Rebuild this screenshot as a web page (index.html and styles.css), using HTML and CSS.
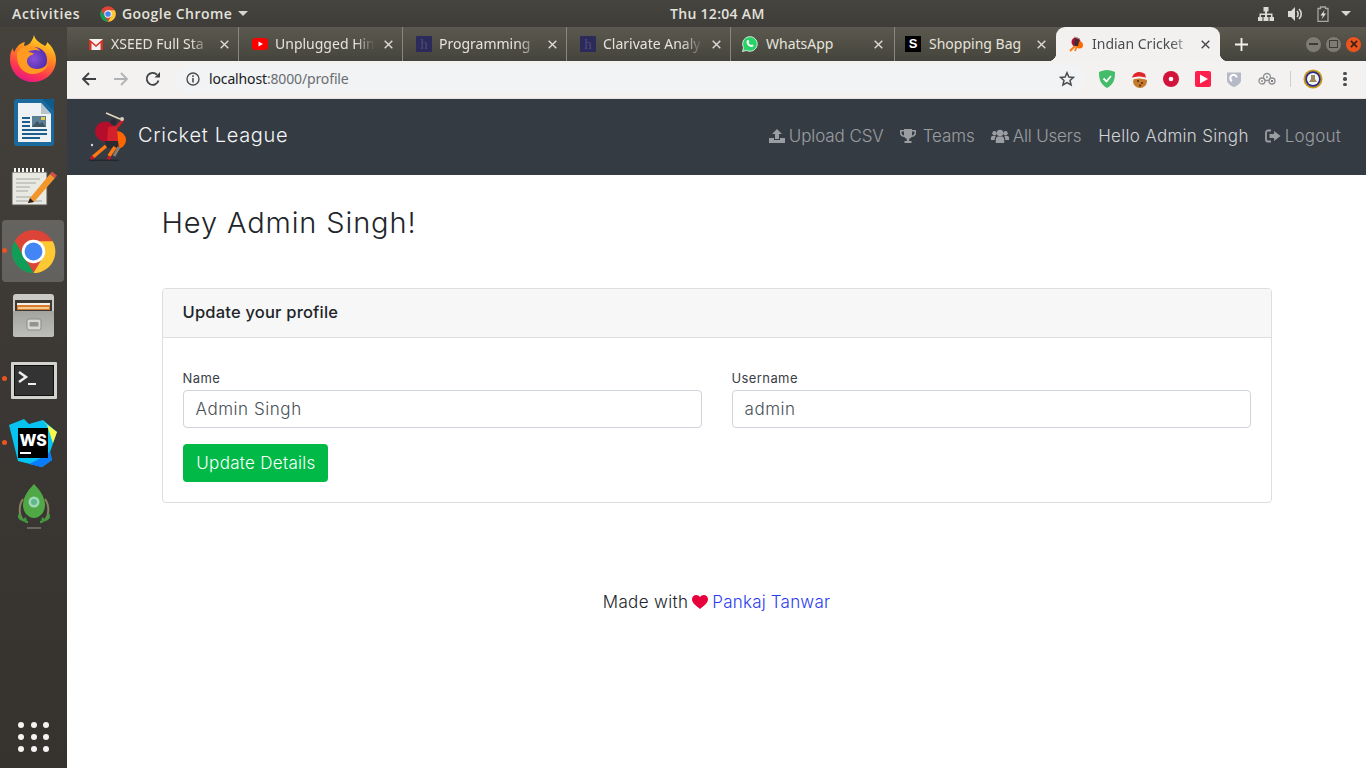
FILE: index.html
```html
<!DOCTYPE html>
<html lang="en">
<head>
<meta charset="utf-8">
<title>Indian Cricket League</title>
<link rel="stylesheet" href="styles.css">
</head>
<body>
<header class="topbar">
  <div class="top-left">
    <span class="activities">Activities</span>
    <span class="app-menu">
      <svg class="top-chrome" viewBox="0 0 48 48"><circle cx="24" cy="24" r="23" fill="#db4437"/><path d="M4 12.500 14 30 24.500 47A23 23 0 0 1 4 12.500z" fill="#0f9d58"/><path d="M24 13H44.500A23 23 0 0 1 24 47L34 30z" fill="#fcc934"/><circle cx="24" cy="24" r="11" fill="#fff"/><circle cx="24" cy="24" r="8.500" fill="#4285f4"/></svg>
      Google Chrome
      <i class="caret"></i>
    </span>
  </div>
  <time class="clock">Thu 12:04 AM</time>
  <div class="tray">
    <svg class="tray-icon" viewBox="0 0 16 16"><path d="M5.500 1h5v4.500H9v2h5.500V11H16v4h-4.500v-4H13V9H9v2h1.500v4h-5v-4H7V9H3v2h1.500v4H0v-4h1.500V7.500H7v-2H5.500z" fill="#dcdad5"/></svg>
    <svg class="tray-icon" viewBox="0 0 16 16"><path d="M1 5h3l4-4v14l-4-4H1z" fill="#dcdad5"/><path d="M10 5c1.500 1.500 1.500 4.500 0 6M12 3c3 2.500 3 7.500 0 10" fill="none" stroke="#dcdad5" stroke-width="1.600"/></svg>
    <svg class="tray-icon" viewBox="0 0 16 16"><path d="M3 2.500h2.500V1h5v1.500H13V15.500H3z" fill="none" stroke="#a9a7a1" stroke-width="1.300"/><path d="M9.500 4 5.500 9.500H8L6.500 13.500 11 7.500H8.500z" fill="#e6e4df"/></svg>
    <i class="caret"></i>
  </div>
</header>

<div class="desktop">
  <nav class="dock">
    <div class="dock-cell dock-first">
      <svg class="dock-firefox" viewBox="0 0 48 48">
        <defs>
          <linearGradient id="fx1" x1="0.700" y1="0" x2="0.300" y2="1"><stop offset="0" stop-color="#ffe226"/><stop offset=".4" stop-color="#ff8a1f"/><stop offset=".75" stop-color="#ff3750"/><stop offset="1" stop-color="#e31587"/></linearGradient>
          <radialGradient id="fx2" cx=".5" cy=".45" r=".55"><stop offset="0" stop-color="#8a4fd8"/><stop offset="1" stop-color="#4a2ba8"/></radialGradient>
        </defs>
        <path d="M25 1c1 5 6 8 11 11 2-2 2-3 2-4 6 5 9 12 9 18 0 12-10 22-23 22S1 38 1 25c0-5 1-8 3-11 0 2 .5 3 1.500 4C7 13 11 9 16 8c-1 2-1 3-.5 4 5-1 8-5 9.500-11z" fill="url(#fx1)"/>
        <circle cx="25" cy="26" r="13" fill="url(#fx2)"/>
        <path d="M8 19c2-4 7-7 12-7 5 0 9 2 11 5-4-2-9-1-12 1 3 0 5 1 6 2-3 1-7 3-7 7 0 5 5 8 10 8 5 0 9-3 11-6-1 7-8 11-15 11C14 40 7 32 8 19z" fill="#ff9b20"/>
      </svg>
    </div>
    <div class="dock-cell">
      <svg class="dock-writer" viewBox="0 0 40 48">
        <path d="M3 0H40V44a3 3 0 0 1-3 3H3a3 3 0 0 1-3-3V3a3 3 0 0 1 3-3z" fill="#1a6a9e"/>
        <path d="M28 0H37a3 3 0 0 1 3 3V12z" fill="#0e5b8e"/>
        <path d="M4 4H27L37 15V43H4z" fill="#eef2f4"/>
        <path d="M27 4V15H37z" fill="#b8c4cc"/>
        <path d="M8 18h8v2H8zM8 22h8v2H8zM8 26h8v2H8zM8 30h25v2H8zM8 34h25v2H8zM8 38h18v2H8z" fill="#1c5f8c"/>
        <rect x="18" y="17" width="14" height="11" fill="#5d7f95"/>
        <path d="M18 28l5-6 3 3 2-2 4 5z" fill="#3d5664"/><rect x="27" y="18" width="4" height="3" fill="#e9c948"/>
      </svg>
    </div>
    <div class="dock-cell">
      <svg class="dock-notes" viewBox="0 0 46 40">
        <path d="M1 5H36V38H1z" fill="#e9e9e4" stroke="#55524d"/>
        <path d="M4 5V1M8 5V1M12 5V1M16 5V1M20 5V1M24 5V1M28 5V1M32 5V1" stroke="#f4f4f2" stroke-width="2"/>
        <path d="M5 12h24M5 16h20M5 20h14M5 24h12M5 30h18M5 34h26" stroke="#a8a8a2" stroke-width="1.200"/>
        <path d="M19 31 39 7l5 4-21 24-6 1z" fill="#f2952b"/>
        <path d="M39 7l2-2.500 5 4-2 2.500z" fill="#d4504f"/>
        <path d="M17 36l2-5 4 4z" fill="#222"/>
      </svg>
    </div>
    <div class="dock-cell">
      <span class="dock-running"></span>
      <span class="dock-active">
        <svg class="dock-chrome" viewBox="0 0 48 48"><circle cx="24" cy="24" r="23" fill="#db4437"/><path d="M4 12.500 14 30 24.500 47A23 23 0 0 1 4 12.500z" fill="#0f9d58"/><path d="M24 13H44.500A23 23 0 0 1 24 47L34 30z" fill="#fcc934"/><circle cx="24" cy="24" r="12.500" fill="#fff"/><circle cx="24" cy="24" r="9.500" fill="#4285f4"/></svg>
      </span>
    </div>
    <div class="dock-cell">
      <svg class="dock-files" viewBox="0 0 41 43">
        <defs>
          <linearGradient id="fl1" x1="0" y1="0" x2="0" y2="1"><stop offset="0" stop-color="#a3a3a0"/><stop offset="1" stop-color="#bdbdba"/></linearGradient>
        </defs>
        <path d="M3 0H38a3 3 0 0 1 3 3V42H0V3a3 3 0 0 1 3-3z" fill="#c9c9c6"/>
        <rect x="2" y="6" width="37" height="14" fill="#3b3835"/>
        <rect x="4" y="9" width="33" height="2" fill="#f5f1e8"/>
        <rect x="4" y="11" width="33" height="5" fill="#d77a32"/>
        <rect x="5" y="13" width="31" height="2" fill="#f5c98a"/>
        <path d="M0 17H41V41a2 2 0 0 1-2 2H2a2 2 0 0 1-2-2z" fill="url(#fl1)"/>
        <rect x="14" y="25" width="14" height="11" rx="2" fill="#d6d6d3" stroke="#8b8b88"/>
        <rect x="16.500" y="28" width="9" height="4.500" rx="1" fill="#92928f"/>
      </svg>
    </div>
    <div class="dock-cell dock-low">
      <span class="dock-running"></span>
      <svg class="dock-term" viewBox="0 0 46 37">
        <rect width="46" height="37" rx="1" fill="#d2d2cf"/>
        <rect x="3" y="3" width="40" height="31" fill="#111"/>
        <rect x="4" y="4" width="38" height="29" fill="#333"/>
        <path d="M8 10l7 5-7 5" fill="none" stroke="#eee" stroke-width="2.500"/>
        <rect x="17" y="21" width="8" height="2" fill="#eee"/>
      </svg>
    </div>
    <div class="dock-cell">
      <span class="dock-running"></span>
      <svg class="dock-ws" viewBox="0 0 48 48">
        <path d="M0 6 15 0l5 5 14-4 14 12-7 20 2 8-10 7-24-6-3-12z" fill="#07c3f2"/>
        <path d="M32 1 48 13 44 24 38 6z" fill="#fcf84a"/>
        <path d="M30 40l11-7 2 8-10 7-13-3z" fill="#087cfa"/>
        <rect x="9" y="9" width="30" height="30" fill="#000"/>
        <text class="ws-text" x="10.500" y="27">WS</text>
        <rect x="11" y="33" width="11" height="2" fill="#fff"/>
      </svg>
    </div>
    <div class="dock-cell">
      <svg class="dock-rocket" viewBox="0 0 36 46">
        <path d="M7 15C2 22 3 33 8 37M29 15c5 7 4 18-1 22" fill="none" stroke="#8a8260" stroke-width="2"/>
        <path d="M18 0C25 7 29 14 29 21c0 7-5 13-11 13S7 28 7 21C7 14 11 7 18 0z" fill="#4fa845"/>
        <circle cx="18" cy="18" r="5.500" fill="#9fd8b8"/><circle cx="18" cy="18" r="3" fill="#5fb78a"/>
        <path d="M4 30c-2 3 0 6 4 6M32 30c2 3 0 6-4 6M10 34c-2 2-1 4 2 4M26 34c2 2 1 4-2 4" fill="none" stroke="#3e9c3e" stroke-width="2.500"/>
        <path d="M11 44h14" stroke="#7a7770" stroke-width="1.500"/>
      </svg>
    </div>
    <div class="dock-grid">
      <i></i><i></i><i></i><i></i><i></i><i></i><i></i><i></i><i></i>
    </div>
  </nav>

  <div class="window">
    <div class="tabstrip">
      <div class="tab">
        <svg class="fav" viewBox="0 0 16 16"><path d="M1 3H15V14H1z" fill="#f4f4f4"/><path d="M1 3 8 9 15 3V14H12.500V7L8 11 3.500 7V14H1z" fill="#d93025"/></svg>
        <span class="tab-title tab-fade">XSEED Full Sta</span>
        <svg class="tab-x" viewBox="0 0 9 9"><path d="M.7.7 8.300 8.300M8.300.7.7 8.300" stroke="currentColor" stroke-width="1.400"/></svg>
      </div>
      <div class="tab">
        <svg class="fav" viewBox="0 0 16 16"><rect y="2" width="16" height="12" rx="3.500" fill="#f00"/><path d="M6.500 5.500 11 8 6.500 10.500z" fill="#fff"/></svg>
        <span class="tab-title tab-fade">Unplugged Hin</span>
        <svg class="tab-x" viewBox="0 0 9 9"><path d="M.7.7 8.300 8.300M8.300.7.7 8.300" stroke="currentColor" stroke-width="1.400"/></svg>
      </div>
      <div class="tab">
        <span class="fav fav-h">h</span>
        <span class="tab-title tab-fade">Programming</span>
        <svg class="tab-x" viewBox="0 0 9 9"><path d="M.7.7 8.300 8.300M8.300.7.7 8.300" stroke="currentColor" stroke-width="1.400"/></svg>
      </div>
      <div class="tab">
        <span class="fav fav-h">h</span>
        <span class="tab-title tab-fade">Clarivate Analy</span>
        <svg class="tab-x" viewBox="0 0 9 9"><path d="M.7.7 8.300 8.300M8.300.7.7 8.300" stroke="currentColor" stroke-width="1.400"/></svg>
      </div>
      <div class="tab tab-whatsapp">
        <svg class="fav" viewBox="0 0 16 16"><path d="M.5 15.500 1.600 11.600A7.300 7.300 0 1 1 4.500 14.400z" fill="#25d366" stroke="#fff" stroke-width=".8"/><path d="M5.300 4.300c.9-.7 1.300-.4 1.600.4l.3.900c.1.300-.4.800-.6 1.100.5 1 1.400 1.900 2.500 2.400.3-.2.700-.8 1-.7l1.200.6c.4.200.3.800 0 1.300-.9 1.200-2.700.9-4.500-.3C5 8.700 3.700 5.800 5.300 4.300z" fill="#fff"/></svg>
        <span class="tab-title">WhatsApp</span>
        <svg class="tab-x" viewBox="0 0 9 9"><path d="M.7.7 8.300 8.300M8.300.7.7 8.300" stroke="currentColor" stroke-width="1.400"/></svg>
      </div>
      <div class="tab tab-shop">
        <span class="fav fav-s">S</span>
        <span class="tab-title">Shopping Bag</span>
        <svg class="tab-x" viewBox="0 0 9 9"><path d="M.7.7 8.300 8.300M8.300.7.7 8.300" stroke="currentColor" stroke-width="1.400"/></svg>
      </div>
      <div class="tab tab-active">
        <svg class="fav" viewBox="0 0 16 16"><circle cx="7" cy="6" r="4.500" fill="#b01030"/><circle cx="10.500" cy="9" r="3.500" fill="#ff6a00"/><path d="M5 1 11 3" stroke="#9a8f86"/><path d="M6 3h3l1 3-1 4H5z" fill="#3a2f33"/><path d="M6 10 1 15M8 10 6 15" stroke="#ff7a10" stroke-width="1.800"/></svg>
        <span class="tab-title tab-fade">Indian Cricket</span>
        <svg class="tab-x" viewBox="0 0 9 9"><path d="M.7.7 8.300 8.300M8.300.7.7 8.300" stroke="currentColor" stroke-width="1.400"/></svg>
      </div>
      <svg class="tab-new" viewBox="0 0 14 14"><path d="M7 0V14M0 7H14" stroke="#f2f1ee" stroke-width="2"/></svg>
      <div class="wm">
        <span class="wm-btn"><i class="wm-min"></i></span>
        <span class="wm-btn"><i class="wm-max"></i></span>
        <span class="wm-btn wm-close"><svg class="wm-x" viewBox="0 0 9 9"><path d="M1 1 8 8M8 1 1 8" stroke="#3a2014" stroke-width="1.800"/></svg></span>
      </div>
    </div>

    <div class="toolbar">
      <svg class="tb-btn" viewBox="0 0 16 16"><path d="M15 8H2M8 2 2 8l6 6" fill="none" stroke="#3c4043" stroke-width="1.800"/></svg>
      <svg class="tb-btn tb-gap" viewBox="0 0 16 16"><path d="M1 8H14M8 2l6 6-6 6" fill="none" stroke="#b0b2b4" stroke-width="1.800"/></svg>
      <svg class="tb-btn tb-gap" viewBox="0 0 16 16"><path d="M13.500 9.500A6 6 0 1 1 12 3.600" fill="none" stroke="#3c4043" stroke-width="1.800"/><path d="M9.500 6.500H15V1z" fill="#3c4043"/></svg>
      <div class="omnibox">
        <svg class="omni-info" viewBox="0 0 14 14"><circle cx="7" cy="7" r="6" fill="none" stroke="#4a4d50" stroke-width="1.400"/><path d="M6.200 6h1.600v4.500H6.200zM6.200 3.300h1.600v1.600H6.200z" fill="#4a4d50"/></svg>
        <span class="url"><span class="url-host">localhost</span>:8000/profile</span>
        <svg class="omni-star" viewBox="0 0 16 16"><path d="M8 1.700 9.900 6l4.600.4-3.500 3 1.100 4.500L8 11.500 3.900 13.900 5 9.400l-3.500-3L6.100 6z" fill="none" stroke="#4a4d50" stroke-width="1.500"/></svg>
      </div>
      <div class="exts">
        <svg class="ext ext-tall" viewBox="0 0 16 18"><path d="M8 0C5 0 2.500 1 0 2c0 7 1 12 8 16 7-4 8-9 8-16C13.500 1 11 0 8 0z" fill="#44bd6a"/><path d="M4.500 8.500 7.500 11.500 12 6" fill="none" stroke="#fff" stroke-width="1.800"/></svg>
        <svg class="ext ext-big" viewBox="0 0 18 18"><circle cx="10" cy="11" r="7" fill="#c47a2a"/><circle cx="8" cy="11" r="1" fill="#4a2b10"/><circle cx="12" cy="13" r="1" fill="#4a2b10"/><circle cx="10" cy="15.500" r="1" fill="#4a2b10"/><path d="M2 8C3 2 10 0 15 4l1 4z" fill="#e0262b"/><path d="M1 8c5-2 10-2 16 0v2c-6-2-11-2-16 0z" fill="#f5f5f5"/><circle cx="1.800" cy="10" r="1.600" fill="#eee"/></svg>
        <svg class="ext" viewBox="0 0 16 16"><circle cx="8" cy="8" r="8" fill="#d2143a"/><circle cx="8" cy="8" r="2.300" fill="#fff"/></svg>
        <svg class="ext" viewBox="0 0 16 16"><rect width="16" height="16" rx="2" fill="#ff1f4b"/><path d="M5 3.500 13 8 5 12.500z" fill="#fff"/></svg>
        <svg class="ext ext-shield" viewBox="0 0 14 16"><path d="M0 1.500h14V9c0 3-3 5.500-7 7-4-1.500-7-4-7-7z" fill="#b6b9c6"/><path d="M9.800 6.500A3.300 3.300 0 1 0 5 10" fill="none" stroke="#fff" stroke-width="2"/></svg>
        <svg class="ext ext-big" viewBox="0 0 18 14"><g fill="none" stroke="#8e9093" stroke-width="1.300"><circle cx="4" cy="9" r="3"/><circle cx="9" cy="5" r="3.500"/><circle cx="14" cy="9" r="3"/></g><circle cx="9" cy="5" r="1" fill="#8e9093"/><circle cx="4" cy="9" r="1" fill="#8e9093"/><circle cx="14" cy="9" r="1" fill="#555"/></svg>
      </div>
      <span class="tb-sep"></span>
      <svg class="avatar" viewBox="0 0 20 20"><circle cx="10" cy="10" r="9.500" fill="#c59a1b"/><circle cx="10" cy="10" r="7.700" fill="#2a2a8c"/><circle cx="10" cy="10" r="6" fill="#f4f4f4"/><path d="M8 6h4v4l2 3H6l2-3z" fill="#9a8a5a"/></svg>
      <span class="kebab"><i></i><i></i><i></i></span>
    </div>

    <div class="page">
      <div class="navbar">
        <div class="brand">
          <svg class="logo" viewBox="0 0 40 50">
            <circle cx="16" cy="20.500" r="10" fill="#b50d2c"/>
            <circle cx="28" cy="29" r="9" fill="#ff6600"/>
            <path d="M17 2 31 8" stroke="#e8d8c0" stroke-width="1.500"/>
            <path d="M27 17 34 9" stroke="#c4202a" stroke-width="3"/>
            <circle cx="33" cy="8" r="2" fill="#d9d0c4"/>
            <path d="M19 16 28 15 29 31 18 31z" fill="#d4202a"/>
            <circle cx="24.500" cy="11" r="3" fill="#2e2a35"/>
            <path d="M16 30H29L30 37H17z" fill="#2a2a30"/>
            <path d="M17 35 4 46" stroke="#ff7a10" stroke-width="3.500"/>
            <path d="M26 36 20 45" stroke="#ff7a10" stroke-width="3.500"/>
            <path d="M30 36 25 45" stroke="#8a7a70" stroke-width="3"/>
            <circle cx="3" cy="47" r="2" fill="#c8142c"/>
            <circle cx="20" cy="47" r="2" fill="#c8142c"/>
            <path d="M0 49.300h30" stroke="#23272c" stroke-width="1.300"/>
            <circle cx="3" cy="34" r="1.200" fill="#d8d8d8"/>
          </svg>
          <span class="brand-text">Cricket League</span>
        </div>
        <ul class="nav">
          <li class="nav-item nav-upload">
            <svg class="nav-icon" viewBox="0 0 16 16"><path d="M8 1 13 6H10V11H6V6H3zM0 10H5V12H11V10H16V15H0z" fill="currentColor"/></svg>
            <span>Upload CSV</span>
          </li>
          <li class="nav-item nav-teams">
            <svg class="nav-icon" viewBox="0 0 16 16"><path d="M4 1H12V2H16V5C16 8 13 9 11.500 9C11 10 10 10.500 9.200 10.700V13H11.500V15H4.500V13H6.800V10.700C6 10.500 5 10 4.500 9 3 9 0 8 0 5V2H4zM1.500 3.500V5C1.500 6.300 2.800 7.200 4 7.500V3.500zM14.500 3.500H12V7.500C13.200 7.200 14.500 6.300 14.500 5z" fill="currentColor"/></svg>
            <span>Teams</span>
          </li>
          <li class="nav-item nav-users">
            <svg class="nav-icon nav-icon-wide" viewBox="0 0 18 15"><g fill="currentColor"><circle cx="3.500" cy="4.200" r="2.200"/><circle cx="14.500" cy="4.200" r="2.200"/><circle cx="9" cy="4" r="3.200"/><path d="M0 11V8.500C0 7.500 1 7 2 7h2.800C4 8 3.700 9 3.700 11zM18 11V8.500C18 7.500 17 7 16 7h-2.800c.8 1 1.100 2 1.100 4z"/><path d="M4.800 14V10.500C4.800 8.500 6 7.500 7 7.500h4c1 0 2.200 1 2.200 3V14z"/></g></svg>
            <span>All Users</span>
          </li>
          <li class="nav-item nav-active"><span>Hello Admin Singh</span></li>
          <li class="nav-item nav-logout">
            <svg class="nav-icon" viewBox="0 0 16 16"><path d="M6 2.500H3A2 2 0 0 0 1 4.500V11.500A2 2 0 0 0 3 13.500H6" fill="none" stroke="currentColor" stroke-width="1.800"/><path d="M9 3 15.500 8 9 13V10H4.500V6H9z" fill="currentColor"/></svg>
            <span>Logout</span>
          </li>
        </ul>
      </div>

      <main class="container">
        <h1 class="greeting">Hey Admin Singh!</h1>
        <section class="card">
          <h2 class="card-header">Update your profile</h2>
          <form class="card-body">
            <div class="form-row">
              <label class="field">
                <span class="field-label">Name</span>
                <input class="field-input" type="text" value="Admin Singh">
              </label>
              <label class="field">
                <span class="field-label">Username</span>
                <input class="field-input" type="text" value="admin">
              </label>
            </div>
            <button class="btn" type="button">Update Details</button>
          </form>
        </section>
        <footer class="credit">
          Made with
          <svg class="heart" viewBox="0 0 16 14"><path d="M8 14C3 10 0 7.500 0 4.200 0 1.800 1.900 0 4.200 0 5.800 0 7.200.8 8 2.200 8.800.8 10.200 0 11.800 0 14.100 0 16 1.800 16 4.200 16 7.500 13 10 8 14z" fill="#e6003c"/></svg>
          <a class="credit-link">Pankaj Tanwar</a>
        </footer>
      </main>
    </div>
  </div>
</div>
</body>
</html>
```
FILE: styles.css
```css
* { box-sizing: border-box; }
html, body { margin: 0; padding: 0; height: 100%; overflow: hidden; }
body {
  width: 1366px;
  height: 768px;
  display: flex;
  flex-direction: column;
  font-family: Inter, "Liberation Sans", sans-serif;
  background: #fff;
}

/* GNOME top bar */
.topbar {
  height: 27px;
  flex: none;
  display: flex;
  align-items: center;
  padding-left: 12px;
  background: linear-gradient(#45443f, #3e3d39);
  color: #e4e2dc;
  font: 600 14px "Open Sans", sans-serif;
}
.top-left { width: 658px; display: flex; align-items: center; }
.activities { width: 88px; letter-spacing: .7px; }
.app-menu { display: flex; align-items: center; letter-spacing: .45px; }
.top-chrome { width: 16px; height: 16px; margin-right: 6px; }
.caret {
  display: inline-block;
  width: 0; height: 0;
  border-left: 5px solid transparent;
  border-right: 5px solid transparent;
  border-top: 5px solid #d8d6d0;
}
.app-menu .caret { margin-left: 6px; }
.clock { letter-spacing: .3px; }
.tray { margin-left: auto; display: flex; align-items: center; padding-right: 15px; }
.tray-icon { width: 16px; height: 16px; margin-right: 12.500px; }
.tray .caret { margin-left: -2.500px; }

.desktop { flex: 1; display: flex; min-height: 0; }

/* Launcher */
.dock {
  width: 67px;
  flex: none;
  display: flex;
  flex-direction: column;
  background: linear-gradient(#45423c, #3a3734 50%, #36332f);
}
.dock-cell {
  position: relative;
  height: 64px;
  flex: none;
  display: flex;
  align-items: center;
  justify-content: center;
}
.dock-first { padding-bottom: 3px; }
.dock-low { padding-top: 3px; }
.dock-running {
  position: absolute;
  left: 2px; top: 29px;
  width: 5px; height: 5px;
  border-radius: 50%;
  background: #e95420;
}
.dock-active {
  width: 62px; height: 62px;
  margin-left: -1px;
  border-radius: 4px;
  background: rgba(255,255,255,.2);
  display: flex;
  align-items: center;
  justify-content: center;
}
.dock-firefox { width: 48px; height: 48px; margin-left: -1px; }
.dock-writer { width: 40px; height: 48px; }
.dock-notes { width: 46px; height: 40px; }
.dock-chrome { width: 45px; height: 45px; }
.dock-files { width: 41px; height: 43px; margin-left: -1px; }
.dock-term { width: 46px; height: 37px; }
.dock-ws { width: 48px; height: 48px; margin-left: -1px; }
.ws-text { font: 800 16px Inter, sans-serif; fill: #fff; }
.dock-rocket { width: 36px; height: 46px; }
.dock-grid {
  margin: auto 18px 16px;
  display: grid;
  grid-template-columns: repeat(3, 6px);
  gap: 6px;
  justify-content: space-between;
}
.dock-grid i { width: 6px; height: 6px; border-radius: 50%; background: #f4f3f1; }

/* Browser */
.window { flex: 1; min-width: 0; display: flex; flex-direction: column; }
.tabstrip {
  height: 34px;
  flex: none;
  display: flex;
  align-items: stretch;
  padding-left: 8px;
  background: linear-gradient(#5b594f, #45443c);
  font: 400 14px "Noto Sans", sans-serif;
}
.tab {
  width: 164px;
  flex: none;
  position: relative;
  display: flex;
  align-items: center;
  padding-left: 13px;
  color: #e6e3dc;
  border-right: 1px solid #8a887e;
}
.tab-whatsapp { padding-left: 11px; }
.tab-shop { border-right: 0; width: 161px; padding-left: 10px; }
.tab-whatsapp .fav, .tab-shop .fav { margin-right: 8px; }
.tab-whatsapp .tab-title, .tab-shop .tab-title { width: 101px; }
.fav { width: 16px; height: 16px; flex: none; margin-right: 7px; }
.fav-h {
  background: #2b2a5a;
  color: #4d4c75;
  font: 400 15px/16px "Liberation Serif", serif;
  text-align: center;
  border-radius: 1px;
}
.fav-s {
  background: #000;
  color: #fff;
  font: 700 13px/16px "Liberation Sans", sans-serif;
  text-align: center;
}
.tab-title {
  width: 102px;
  flex: none;
  margin-top: -2px;
  white-space: nowrap;
  overflow: hidden;
}
.tab-fade {
  -webkit-mask-image: linear-gradient(90deg, #000 78%, transparent 98%);
  mask-image: linear-gradient(90deg, #000 78%, transparent 98%);
}
.tab-x {
  margin-left: 7px;
  width: 9px;
  height: 9px;
  flex: none;
  color: #dcdad4;
}
.tab-active {
  border-right: 0;
  background: #f2f1f0;
  color: #4a4d50;
  border-radius: 9px 9px 0 0;
}
.tab-active .tab-x { color: #45474a; }
.tab-active::before, .tab-active::after {
  content: "";
  position: absolute;
  bottom: 0;
  width: 8px; height: 8px;
}
.tab-active::before { left: -8px; background: radial-gradient(circle at 0 0, transparent 8px, #f2f1f0 8.500px); }
.tab-active::after { right: -8px; background: radial-gradient(circle at 100% 0, transparent 8px, #f2f1f0 8.500px); }
.tab-new { width: 13px; height: 13px; margin: auto 0 auto 15px; flex: none; }
.wm { margin-left: auto; display: flex; align-items: center; gap: 3px; padding-right: 4px; }
.wm-btn {
  width: 17px; height: 17px;
  border-radius: 50%;
  background: #7d7b72;
  border: 1px solid #4b4a43;
  display: flex; align-items: center; justify-content: center;
}
.wm-min { width: 9px; height: 2px; background: #3c3b36; }
.wm-max { width: 9px; height: 8px; border: 1px solid #3c3b36; }
.wm-close { background: #e9541f; }
.wm-x { width: 8px; height: 8px; }

.toolbar {
  height: 38px;
  flex: none;
  display: flex;
  align-items: center;
  padding: 0 0 1px 14px;
  background: #f3f2f1;
  border-bottom: 1px solid #e4e1de;
}
.tb-btn { width: 16px; height: 16px; flex: none; }
.tb-gap { margin-left: 16px; }
.omnibox {
  width: 908px;
  height: 28px;
  margin-left: 15px;
  flex: none;
  display: flex;
  align-items: center;
  padding: 0 9px 0 10px;
  border-radius: 14px;
  background: #f1f3f4;
}
.omni-info { width: 14px; height: 14px; flex: none; margin-right: 9px; }
.url { margin-top: -2px; font: 400 14px "Noto Sans", sans-serif; color: #6a6e72; letter-spacing: -.14px; }
.url-host { color: #202124; }
.omni-star { width: 16px; height: 16px; margin-left: auto; }
.exts { display: flex; align-items: center; margin-left: 15px; }
.ext { width: 16px; height: 16px; flex: none; margin-right: 16px; }
.ext-tall { height: 18px; }
.ext-big { width: 18px; height: 18px; margin-left: -1px; margin-right: 15px; }
.ext-shield { margin-left: -1px; margin-right: 17px; }
.tb-sep { width: 1px; height: 16px; background: #cfcfcd; margin-left: -1px; flex: none; }
.avatar { width: 20px; height: 20px; margin-left: 12px; flex: none; }
.kebab { margin-left: 20px; display: flex; flex-direction: column; gap: 2px; }
.kebab i { width: 3.500px; height: 3.500px; border-radius: 50%; background: #4a4d50; }

/* Site */
.page { flex: 1; min-height: 0; background: #fff; color: #212529; }
.navbar {
  height: 76px;
  display: flex;
  align-items: center;
  justify-content: space-between;
  padding: 0 25px 2px 22px;
  background: #353b43;
  font-family: Inter, sans-serif;
}
.brand { display: flex; align-items: center; }
.logo { width: 40px; height: 50px; margin-right: 9px; }
.brand-text { margin-top: -2px; font-size: 20px; font-weight: 300; color: #f4f5f6; letter-spacing: .7px; }
.nav { list-style: none; display: flex; margin: 0; padding: 0; gap: 16px; }
.nav-item {
  display: flex;
  align-items: center;
  color: rgba(255,255,255,.5);
  font-size: 17px;
  font-weight: 300;
  letter-spacing: .2px;
}
.nav-upload { letter-spacing: -.1px; }
.nav-upload .nav-icon { margin-right: 4px; }
.nav-teams { letter-spacing: -.05px; }
.nav-users { letter-spacing: -.2px; }
.nav-icon { width: 16px; height: 16px; margin-right: 5px; flex: none; }
.nav-teams .nav-icon { margin-right: 7px; }
.nav-logout .nav-icon { margin-right: 4px; }
.nav-icon-wide { width: 18px; height: 15px; margin-right: 4px; }
.nav-active { margin-left: 1px; color: rgba(255,255,255,.78); letter-spacing: .3px; }

.container { width: 1110px; margin: 0 auto; }
.greeting {
  margin: 0;
  padding-top: 29px;
  height: 113px;
  font-size: 29px;
  line-height: 38px;
  font-weight: 300;
  letter-spacing: .87px;
  color: #212529;
}
.card { border: 1px solid #dcdfe2; border-radius: 4px; }
.card-header {
  margin: 0;
  height: 49px;
  padding: 0 20px;
  font-size: 16.500px;
  line-height: 46px;
  font-weight: 500;
  letter-spacing: .2px;
  background: #f7f7f7;
  border-bottom: 1px solid #dcdfe2;
  border-radius: 3px 3px 0 0;
}
.card-body { display: block; padding: 31px 20px 20px; }
.form-row { display: flex; gap: 30px; }
.field { flex: 1; display: block; }
.field-label { display: block; font-size: 13px; line-height: 18px; margin-bottom: 3px; letter-spacing: .4px; color: #3a4046; }
.field-input {
  display: block;
  width: 100%;
  height: 38px;
  padding: 0 12px;
  border: 1px solid #ced4da;
  border-radius: 4px;
  font: 300 17px Inter, sans-serif;
  letter-spacing: .55px;
  color: #495057;
  outline: none;
}
.btn {
  display: block;
  margin-top: 16px;
  width: 145px;
  height: 38px;
  padding: 0 0 1px 2px;
  border: 0;
  border-radius: 4px;
  background: #00b947;
  color: #fff;
  font: 300 17px Inter, sans-serif;
  letter-spacing: .3px;
}
.credit {
  margin-top: 86px;
  display: flex;
  justify-content: center;
  align-items: center;
  gap: 4px;
  font-size: 17px;
  font-weight: 300;
  line-height: 26px;
  letter-spacing: .35px;
  color: #212529;
}
.heart { width: 16px; height: 14px; }
.credit-link { color: #2b3df0; letter-spacing: .2px; }
```
